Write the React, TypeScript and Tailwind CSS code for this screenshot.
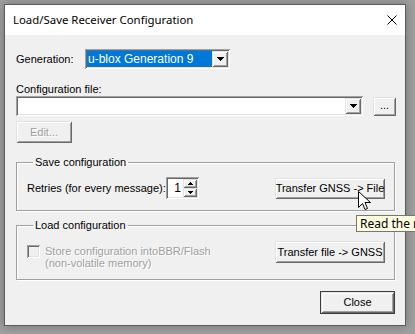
import React from 'react';

const raised =
  'bg-[#f0f0f0] shadow-[inset_1px_1px_#e3e3e3,inset_-1px_-1px_#696969,inset_2px_2px_#ffffff,inset_-2px_-2px_#a0a0a0]';
const sunken =
  'shadow-[inset_1px_1px_#a0a0a0,inset_-1px_-1px_#ffffff,inset_2px_2px_#696969,inset_-2px_-2px_#e3e3e3]';
const disabledText = 'text-[#a0a0a0] [text-shadow:1px_1px_0_#ffffff]';

const DownArrow = () => (
  <svg width="7" height="4" viewBox="0 0 7 4" shapeRendering="crispEdges">
    <path d="M0 0H7V1H6V2H5V3H4V4H3V3H2V2H1V1H0Z" fill="#000" />
  </svg>
);

const DropButton = () => (
  <div className={`w-[16px] h-[16px] flex items-center justify-center ${raised}`}>
    <DownArrow />
  </div>
);

const SmallArrow: React.FC<{ up?: boolean }> = ({ up }) => (
  <svg width="5" height="3" viewBox="0 0 5 3" shapeRendering="crispEdges">
    {up ? (
      <path d="M2 0H3V1H4V2H5V3H0V2H1V1H2Z" fill="#000" />
    ) : (
      <path d="M0 0H5V1H4V2H3V3H2V2H1V1H0Z" fill="#000" />
    )}
  </svg>
);

const Button: React.FC<{ className?: string; disabled?: boolean; children: React.ReactNode }> = ({
  className = '',
  disabled,
  children,
}) => (
  <div
    className={`flex items-center justify-center leading-none whitespace-nowrap ${raised} ${
      disabled ? disabledText : ''
    } ${className}`}
  >
    {children}
  </div>
);

export default function App() {
  return (
    <div className="relative w-[415px] h-[334px] overflow-hidden bg-[#a0a0a0] pl-[4px] pt-[4px] font-['Liberation_Sans',Arial,sans-serif] text-[11px] text-black">
      <div className="w-[402px] h-[322px] border border-[#5a5a5a] bg-[#f0f0f0] flex flex-col shadow-[0_0_10px_rgba(0,0,0,0.3)]">
        {/* title bar */}
        <div className="h-[30px] shrink-0 bg-white flex items-center justify-between pl-[8px] pr-[8px]">
          <span className="font-['Noto_Sans',sans-serif] text-[11.4px] text-black">
            Load/Save Receiver Configuration
          </span>
          <svg width="10" height="10" viewBox="0 0 10 10">
            <path d="M0.5 0.5L9.5 9.5M9.5 0.5L0.5 9.5" stroke="#000" strokeWidth="1" />
          </svg>
        </div>

        <div className="flex flex-col pl-[11px] pt-[14px]">
          {/* generation */}
          <div className="flex items-center h-[20px]">
            <span className="w-[69px]">Generation:</span>
            <div className={`w-[145px] h-[20px] bg-white p-[2px] flex ${sunken}`}>
              <div className="flex-1 h-[16px] bg-[#0078d7] text-white flex items-center pl-[1px] pr-[1px] text-[12px]">
                u-blox Generation 9
              </div>
              <DropButton />
            </div>
          </div>

          {/* configuration file */}
          <div className="mt-[14px] h-[13px] leading-[13px]">Configuration file:</div>
          <div className="flex items-start">
            <div className={`w-[347px] h-[20px] bg-white p-[2px] flex justify-end ${sunken}`}>
              <DropButton />
            </div>
            <Button className="ml-[10px] mt-[1px] w-[23px] h-[19px] pb-[2px]">...</Button>
          </div>

          <Button disabled className="mt-[5px] w-[56px] h-[22px]">
            Edit...
          </Button>

          {/* save configuration */}
          <fieldset className="mt-[13px] w-[379px] border border-[#a0a0a0] shadow-[1px_1px_0_#ffffff,inset_1px_1px_0_#ffffff] pl-[10px] pr-[9px] pt-[8px] pb-[11px]">
            <legend className="ml-[6px] px-[2px] leading-[13px]">Save configuration</legend>
            <div className="flex items-center h-[22px]">
              <span className="w-[139px]">Retries (for every message):</span>
              <div className={`w-[33px] h-[22px] bg-white p-[2px] flex ${sunken}`}>
                <span className="flex-1 text-right pr-[2px] leading-[18px] text-[12px]">1</span>
                <div className="flex flex-col w-[14px]">
                  <div className={`h-[9px] flex items-center justify-center ${raised}`}>
                    <SmallArrow up />
                  </div>
                  <div className={`h-[9px] flex items-center justify-center ${raised}`}>
                    <SmallArrow />
                  </div>
                </div>
              </div>
              <Button className="ml-auto w-[110px] h-[21px]">Transfer GNSS -&gt; File</Button>
            </div>
          </fieldset>

          {/* load configuration */}
          <fieldset className="mt-[8px] w-[379px] border border-[#a0a0a0] shadow-[1px_1px_0_#ffffff,inset_1px_1px_0_#ffffff] pl-[10px] pr-[9px] pt-[9px] pb-[10px]">
            <legend className="ml-[6px] px-[2px] leading-[13px]">Load configuration</legend>
            <div className="flex items-start">
              <div className="flex items-start mt-[4px]">
                <div className={`w-[13px] h-[13px] bg-[#f0f0f0] ${sunken}`} />
                <div className={`ml-[5px] leading-[12px] ${disabledText}`}>
                  <div>Store configuration intoBBR/Flash</div>
                  <div>(non-volatile memory)</div>
                </div>
              </div>
              <Button className="ml-auto w-[110px] h-[22px]">Transfer file -&gt; GNSS</Button>
            </div>
          </fieldset>

          <div className="mt-[11px] ml-[304px] w-[75px] h-[23px] border border-[#3c3c3c]">
            <Button className="w-full h-full">Close</Button>
          </div>
        </div>
      </div>

      {/* tooltip */}
      <div className="absolute left-[356px] top-[215px] h-[17px] border border-[#767676] bg-[#ffffe1] pl-[3px] pr-[3px] whitespace-nowrap font-['Noto_Sans',sans-serif] text-[12px] leading-[15px]">
        Read the receiver configuration and save it to file
      </div>

      {/* mouse cursor */}
      <svg className="absolute left-[358px] top-[191px]" width="13" height="21" viewBox="0 0 13 21">
        <path
          d="M0.5 0.5V16.5L4.5 12.5L7 18.5L9.5 17.5L7 11.5H12.5Z"
          fill="#fff"
          stroke="#000"
          strokeWidth="1"
          strokeLinejoin="miter"
        />
      </svg>
    </div>
  );
}
